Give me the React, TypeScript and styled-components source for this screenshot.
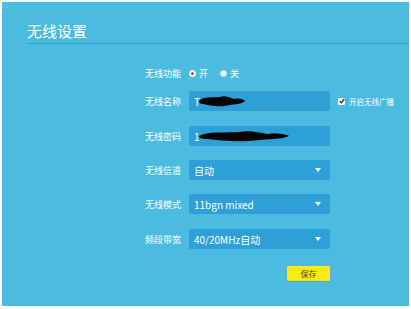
import React from 'react';
import styled, { createGlobalStyle } from 'styled-components';

const GlobalStyle = createGlobalStyle`
  html, body {
    margin: 0;
    padding: 0;
    background: #ffffff;
  }
  body {
    font-family: "Noto Sans CJK SC", "Liberation Sans", sans-serif;
  }
`;

const BLUE = '#4bbce0';
const FIELD = '#2ca0d7';

const Styled = {
  Panel: styled.div`
    margin: 2px;
    width: 407px;
    height: 304px;
    background: ${BLUE};
    box-sizing: border-box;
  `,
  Header: styled.div`
    margin-left: 25px;
    height: 42px;
    box-sizing: border-box;
    padding-top: 20px;
    border-bottom: 1px solid #2d9fd3;
  `,
  Title: styled.h1`
    margin: 0;
    font-size: 15px;
    line-height: 18px;
    font-weight: 400;
    color: #ffffff;
  `,
  Form: styled.div`
    display: flex;
    flex-direction: column;
    padding-left: 143px;
    margin-top: 19px;
  `,
  Row: styled.div<{ top: number }>`
    display: flex;
    align-items: center;
    height: 20px;
    margin-top: ${(p) => p.top}px;
  `,
  Label: styled.div`
    width: 44px;
    font-size: 9px;
    color: #ffffff;
    white-space: nowrap;
  `,
  Radio: styled.span<{ checked?: boolean }>`
    display: inline-flex;
    align-items: center;
    gap: 3px;
    margin-right: 12px;
    font-size: 9px;
    color: #ffffff;
    &::before {
      content: '';
      width: 7px;
      height: 7px;
      border-radius: 50%;
      box-sizing: border-box;
      background: #f2f2f2;
      border: ${(p) => (p.checked ? '2px solid #f2f2f2' : '1px solid #dcdcdc')};
      box-shadow: ${(p) => (p.checked ? 'inset 0 0 0 3px #555' : 'none')};
    }
  `,
  Field: styled.div`
    position: relative;
    width: 141px;
    height: 20px;
    box-sizing: border-box;
    padding: 0 6px 0 5px;
    background: ${FIELD};
    border-radius: 2px;
    display: flex;
    align-items: center;
    justify-content: space-between;
    font-size: 10px;
    color: #ffffff;
  `,
  Arrow: styled.span`
    width: 0;
    height: 0;
    border-left: 3px solid transparent;
    border-right: 3px solid transparent;
    border-top: 4px solid #ffffff;
    margin-right: 3px;
  `,
  Scribble: styled.svg`
    position: absolute;
    top: 4px;
  `,
  Check: styled.label`
    display: inline-flex;
    align-items: center;
    gap: 4px;
    margin-left: 8px;
    font-size: 7.5px;
    color: #ffffff;
    white-space: nowrap;
  `,
  Box: styled.span`
    width: 7px;
    height: 7px;
    background: #f4f4f4;
    border-radius: 1px;
    display: inline-flex;
    align-items: center;
    justify-content: center;
  `,
  Actions: styled.div`
    display: flex;
    justify-content: flex-end;
    width: 185px;
    margin-top: 17px;
  `,
  Save: styled.button`
    width: 43px;
    height: 15px;
    padding: 0;
    border: none;
    border-radius: 1px;
    background: #ffe90f;
    color: #4a4a20;
    font-size: 8px;
    font-family: "Noto Sans CJK SC", sans-serif;
    box-shadow: 0 1px 0 #3aa9d8;
  `,
};

// black marker scribble that hides the value in the screenshot
const Redacted: React.FC<{ width: number; left: number }> = ({ width, left }) => {
  const w = width;
  return (
    <Styled.Scribble width={w} height={12} viewBox={`0 0 ${w} 12`} style={{ left }}>
      <path
        d={`M1 6 C ${w * 0.1} 1, ${w * 0.3} 3, ${w * 0.45} 2 C ${w * 0.55} 0, ${w * 0.65} 2, ${w * 0.75} 4 C ${w * 0.85} 3, ${w * 0.95} 4, ${w - 1} 6 C ${w * 0.9} 10, ${w * 0.7} 9, ${w * 0.55} 11 C ${w * 0.4} 12, ${w * 0.2} 10, ${w * 0.1} 9 C 3 9, 1 8, 1 6 Z`}
        fill="#050505"
      />
    </Styled.Scribble>
  );
};

const Select: React.FC<{ value: string }> = ({ value }) => (
  <Styled.Field>
    <span>{value}</span>
    <Styled.Arrow />
  </Styled.Field>
);

export default function App() {
  return (
    <>
      <GlobalStyle />
      <Styled.Panel>
        <Styled.Header>
          <Styled.Title>无线设置</Styled.Title>
        </Styled.Header>
        <Styled.Form>
          <Styled.Row top={0}>
            <Styled.Label>无线功能</Styled.Label>
            <Styled.Radio checked>开</Styled.Radio>
            <Styled.Radio>关</Styled.Radio>
          </Styled.Row>
          <Styled.Row top={8}>
            <Styled.Label>无线名称</Styled.Label>
            <Styled.Field>
              <span>T</span>
              <Redacted width={48} left={9} />
            </Styled.Field>
            <Styled.Check>
              <Styled.Box>
                <svg width="6" height="6" viewBox="0 0 6 6">
                  <path d="M0.8 3.2 L2.4 4.8 L5.3 1" stroke="#333" strokeWidth="1.3" fill="none" />
                </svg>
              </Styled.Box>
              开启无线广播
            </Styled.Check>
          </Styled.Row>
          <Styled.Row top={15}>
            <Styled.Label>无线密码</Styled.Label>
            <Styled.Field>
              <span>1</span>
              <Redacted width={92} left={9} />
            </Styled.Field>
          </Styled.Row>
          <Styled.Row top={14}>
            <Styled.Label>无线信道</Styled.Label>
            <Select value="自动" />
          </Styled.Row>
          <Styled.Row top={14}>
            <Styled.Label>无线模式</Styled.Label>
            <Select value="11bgn mixed" />
          </Styled.Row>
          <Styled.Row top={15}>
            <Styled.Label>频段带宽</Styled.Label>
            <Select value="40/20MHz自动" />
          </Styled.Row>
          <Styled.Actions>
            <Styled.Save>保存</Styled.Save>
          </Styled.Actions>
        </Styled.Form>
      </Styled.Panel>
    </>
  );
}
